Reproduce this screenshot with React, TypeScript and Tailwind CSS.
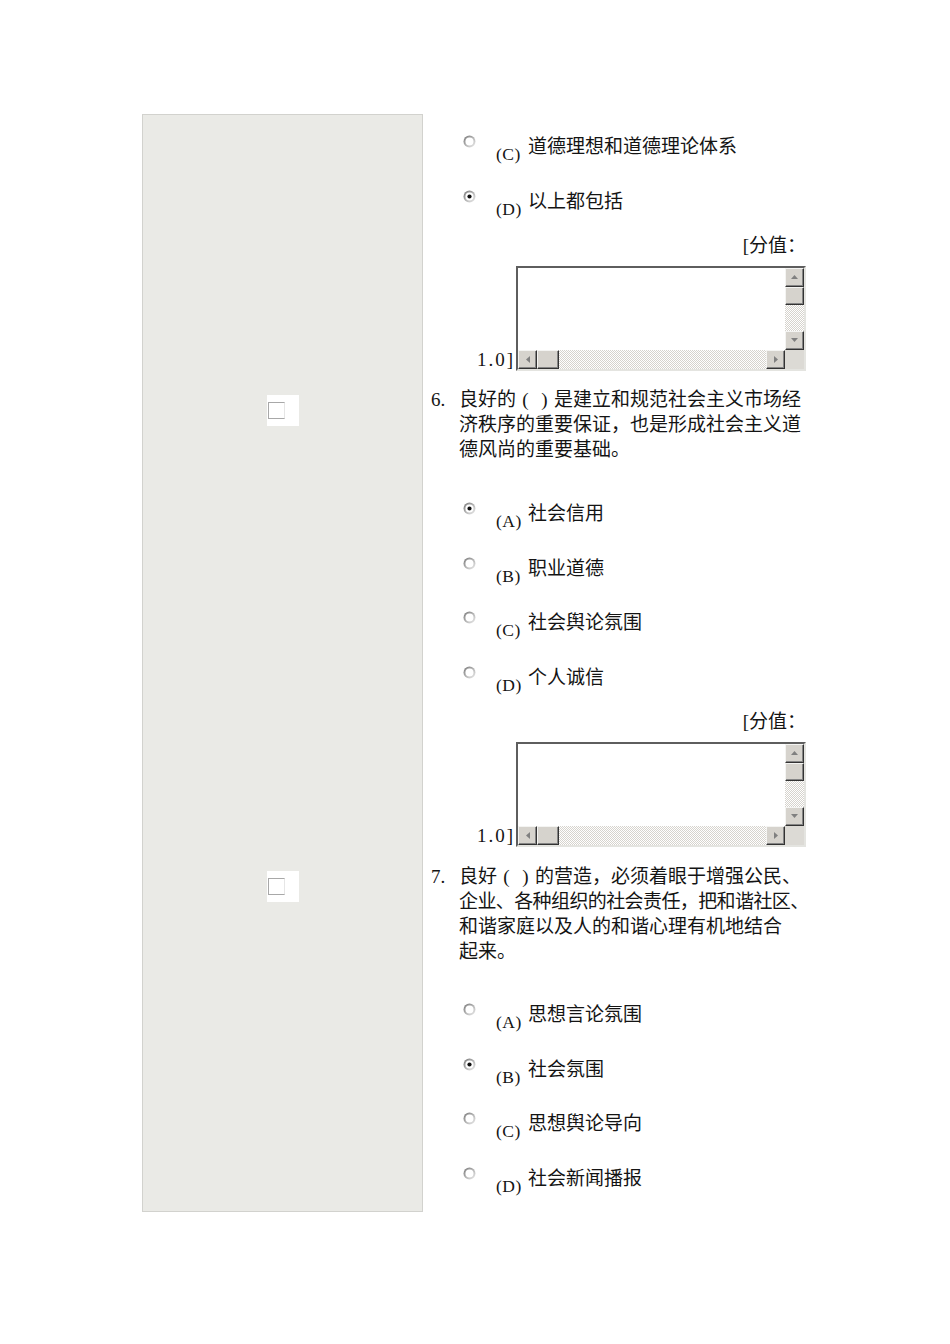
import React from "react";

const Radio: React.FC<{ checked?: boolean }> = ({ checked }) => (
  <svg width="13" height="13" viewBox="0 0 13 13" className="mt-[1px] shrink-0">
    <defs>
      <linearGradient id="rOuter" x1="0" y1="0" x2="1" y2="1">
        <stop offset="0" stopColor="#6e6e6e" />
        <stop offset="1" stopColor="#f4f4f4" />
      </linearGradient>
      <linearGradient id="rInner" x1="0" y1="0" x2="1" y2="1">
        <stop offset="0" stopColor="#8e8e8e" />
        <stop offset="1" stopColor="#e2e2e2" />
      </linearGradient>
    </defs>
    <circle cx="6.5" cy="6.5" r="6" fill="url(#rOuter)" />
    <circle cx="6.5" cy="6.5" r="5" fill="url(#rInner)" />
    <circle cx="6.5" cy="6.5" r="4" fill="#ffffff" />
    {checked && <circle cx="6.5" cy="6.5" r="2.1" fill="#111111" />}
  </svg>
);

const Option: React.FC<{ label: string; text: string; checked?: boolean }> = (props) => (
  <div className="flex items-start h-[25px] pl-[40px]">
    <Radio checked={props.checked} />
    <span className="ml-[20px] mt-[8px] w-[32px] shrink-0 text-[17.5px] leading-[25px] tracking-[0.5px]">
      ({props.label})
    </span>
    <span className="text-[19px] leading-[25px] whitespace-nowrap">{props.text}</span>
  </div>
);

const Arrow: React.FC<{ dir: "up" | "down" | "left" | "right" }> = ({ dir }) => {
  const pts = {
    up: "0,4 3.5,0 7,4",
    down: "0,0 3.5,4 7,0",
    left: "4,0 0,3.5 4,7",
    right: "0,0 4,3.5 0,7",
  }[dir];
  const vertical = dir === "up" || dir === "down";
  return (
    <svg width={vertical ? 7 : 4} height={vertical ? 4 : 7} viewBox={vertical ? "0 0 7 4" : "0 0 4 7"}>
      <polygon points={pts} fill="#808080" />
    </svg>
  );
};

const Btn: React.FC<{ dir?: "up" | "down" | "left" | "right"; className?: string }> = ({ dir, className }) => (
  <div
    className={
      "shrink-0 bg-[#d6d3cd] border border-t-[#f4f4f2] border-l-[#f4f4f2] border-r-[#333333] border-b-[#333333] shadow-[inset_-1px_-1px_0_#858585] flex items-center justify-center " +
      (className ?? "w-[19px] h-[19px]")
    }
  >
    {dir && <Arrow dir={dir} />}
  </div>
);

const Track: React.FC<{ className?: string }> = ({ className }) => (
  <div
    className={
      "bg-[image:repeating-conic-gradient(#d6d3cd_0_25%,#ffffff_0_50%)] bg-[length:2px_2px] bg-size-[2px_2px] " +
      (className ?? "")
    }
  />
);

const TextBox = () => (
  <div className="w-[290px] h-[105px] border-2 border-t-[#5e5e5e] border-l-[#5e5e5e] border-r-[#e4e4e0] border-b-[#e4e4e0] bg-white flex flex-col">
    <div className="flex flex-1">
      <div className="flex-1" />
      <div className="w-[19px] flex flex-col">
        <Btn dir="up" />
        <Btn className="w-[19px] h-[18px]" />
        <Track className="flex-1" />
        <Btn dir="down" />
      </div>
    </div>
    <div className="flex h-[19px]">
      <Btn dir="left" />
      <Btn className="w-[22px] h-[19px]" />
      <Track className="flex-1" />
      <Btn dir="right" />
      <div className="w-[19px] h-[19px] bg-[#dcdad5]" />
    </div>
  </div>
);

const Score: React.FC<{ className?: string }> = ({ className }) => (
  <div className={"flex flex-col items-end " + (className ?? "")}>
    <div className="h-[25px] leading-[25px] text-[19px] whitespace-nowrap">[分值：</div>
    <div className="mt-[8px] flex items-end">
      <span className="mb-[2px] mr-[1px] text-[19px] leading-[19px] tracking-[2px]">1.0]</span>
      <TextBox />
    </div>
  </div>
);

// full-width brackets drawn centred in their cell, as the page's Song font does
const Parens = () => (
  <>
    <span className="inline-block w-[19px] text-center">(</span>
    <span className="inline-block w-[19px] text-center">)</span>
  </>
);

const Question: React.FC<{ num: string; lines: React.ReactNode[]; tight?: number[] }> = (props) => (
  <div className="flex pl-[8px]">
    <span className="w-[28px] shrink-0 text-[19px] leading-[25px]">{props.num}</span>
    <div className="flex flex-col">
      {props.lines.map((line, i) => (
        <div
          key={i}
          className={
            "h-[25px] leading-[25px] text-[19px] whitespace-nowrap " +
            (props.tight?.includes(i) ? "tracking-[-0.6px]" : "")
          }
        >
          {line}
        </div>
      ))}
    </div>
  </div>
);

const LeftCell: React.FC<{ box?: boolean; first?: boolean; last?: boolean }> = (props) => (
  <div
    className={
      "bg-[#eaeae6] border-x border-[#d2d2ce] flex justify-center items-start " +
      (props.first ? "border-t " : "") +
      (props.last ? "border-b " : "")
    }
  >
    {props.box && (
      <div className="mt-[24px] w-[32px] h-[31px] bg-white flex items-center">
        <div className="ml-[1px] w-[17px] h-[17px] bg-white border border-t-[#a8a8a8] border-l-[#a8a8a8] border-b-[#a8a8a8] border-r-[#e6e6e6]" />
      </div>
    )}
  </div>
);

export default function App() {
  return (
    <div className="w-[950px] min-h-[1344px] bg-white text-[#141414] [text-spacing-trim:space-all] font-[family-name:'Liberation_Serif','Noto_Sans_CJK_SC',serif]">
      <div className="pt-[114px] pl-[142px]">
        <div className="grid grid-cols-[281px_383px]">
          <LeftCell first />
          <div className="pt-[20px]">
            <div className="flex flex-col gap-[29.5px]">
              <Option label="C" text="道德理想和道德理论体系" />
              <Option label="D" text="以上都包括" checked />
            </div>
            <Score className="mt-[19px]" />
          </div>

          <LeftCell box />
          <div className="pt-[16.5px]">
            <Question
              num="6."
              lines={[
                <>良好的<Parens />是建立和规范社会主义市场经</>,
                "济秩序的重要保证，也是形成社会主义道",
                "德风尚的重要基础。",
              ]}
            />
            <div className="mt-[39px] flex flex-col gap-[29.5px]">
              <Option label="A" text="社会信用" checked />
              <Option label="B" text="职业道德" />
              <Option label="C" text="社会舆论氛围" />
              <Option label="D" text="个人诚信" />
            </div>
            <Score className="mt-[19px]" />
          </div>

          <LeftCell box last />
          <div className="pt-[17.5px] pb-[21.5px]">
            <Question
              num="7."
              lines={[
                <>良好<Parens />的营造，必须着眼于增强公民、</>,
                "企业、各种组织的社会责任，把和谐社区、",
                "和谐家庭以及人的和谐心理有机地结合",
                "起来。",
              ]}
              tight={[1]}
            />
            <div className="mt-[38px] flex flex-col gap-[29.5px]">
              <Option label="A" text="思想言论氛围" />
              <Option label="B" text="社会氛围" checked />
              <Option label="C" text="思想舆论导向" />
              <Option label="D" text="社会新闻播报" />
            </div>
          </div>
        </div>
      </div>
    </div>
  );
}
